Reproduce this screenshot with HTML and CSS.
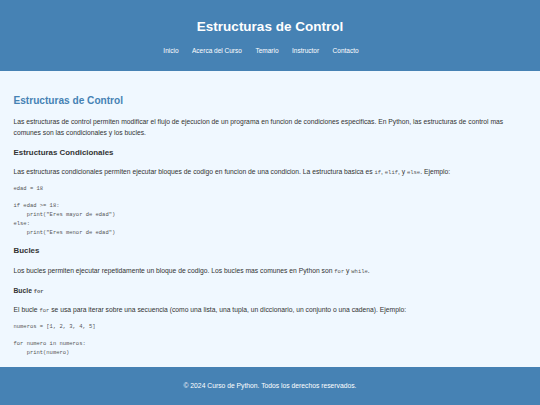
FILE: index.html
```html
<!DOCTYPE html>
<html lang="es">
<head>
<meta charset="utf-8">
<title>Estructuras de Control</title>
<link rel="stylesheet" href="styles.css">
</head>
<body>
<header class="site-header">
  <h1 class="site-title">Estructuras de Control</h1>
  <nav class="site-nav">
    <ul class="nav-list">
      <li><a href="#">Inicio</a></li>
      <li><a href="#">Acerca del Curso</a></li>
      <li><a href="#">Temario</a></li>
      <li><a href="#">Instructor</a></li>
      <li><a href="#">Contacto</a></li>
    </ul>
  </nav>
</header>
<main class="content">
  <h2 class="page-title">Estructuras de Control</h2>
  <p>Las estructuras de control permiten modificar el flujo de ejecucion de un programa en funcion de condiciones especificas. En Python, las estructuras de control mas comunes son las condicionales y los bucles.</p>
  <h3>Estructuras Condicionales</h3>
  <p>Las estructuras condicionales permiten ejecutar bloques de codigo en funcion de una condicion. La estructura basica es <code>if</code>, <code>elif</code>, y <code>else</code>. Ejemplo:</p>
<pre class="code">edad = 18

if edad &gt;= 18:
    print("Eres mayor de edad")
else:
    print("Eres menor de edad")</pre>
  <h3>Bucles</h3>
  <p>Los bucles permiten ejecutar repetidamente un bloque de codigo. Los bucles mas comunes en Python son <code>for</code> y <code>while</code>.</p>
  <h4>Bucle <code>for</code></h4>
  <p>El bucle <code>for</code> se usa para iterar sobre una secuencia (como una lista, una tupla, un diccionario, un conjunto o una cadena). Ejemplo:</p>
<pre class="code">numeros = [1, 2, 3, 4, 5]

for numero in numeros:
    print(numero)</pre>
</main>
<footer class="site-footer">
  <p>&copy; 2024 Curso de Python. Todos los derechos reservados.</p>
</footer>
</body>
</html>
```
FILE: styles.css
```css
html, body {
  margin: 0;
  padding: 0;
}

body {
  font-family: "Liberation Sans", Arial, sans-serif;
  font-size: 6.75px;
  line-height: 1.6;
  color: #333;
  background: #f0f8ff;
}

.site-header {
  background: #4682b4;
  color: #fff;
  text-align: center;
  padding: 6.75px 0;
}

.site-title {
  font-size: 13.5px;
  margin: 9.05px 0;
}

.nav-list {
  list-style: none;
  margin: 6.75px 0;
  padding: 0 18px 0 0;
  display: flex;
  justify-content: center;
  gap: 13.5px;
  font-size: 6.5px;
  line-height: 10.8px;
}

.nav-list a {
  color: #fff;
  text-decoration: none;
}

.content {
  padding: 13.5px 13.5px 6px;
}

.page-title {
  color: #4682b4;
  font-size: 10.125px;
  margin: 8.4px 0;
}

h3 {
  font-size: 7.9px;
  margin: 7.9px 0;
}

h4 {
  font-size: 6.75px;
  margin: 8.99px 0;
}

p {
  margin: 6.75px 0;
}

code {
  font-family: "Liberation Mono", "Courier New", monospace;
  font-size: 5.48px;
  color: #555;
}

.code {
  font-family: "Liberation Mono", "Courier New", monospace;
  font-size: 5.48px;
  margin: 5.48px 0;
  color: #555;
}

.site-footer {
  position: fixed;
  left: 0;
  right: 0;
  bottom: 0;
  background: #4682b4;
  color: #fff;
  text-align: center;
  padding: 6.75px 0;
}

.site-footer p {
  margin: 6.75px 0;
}
```
